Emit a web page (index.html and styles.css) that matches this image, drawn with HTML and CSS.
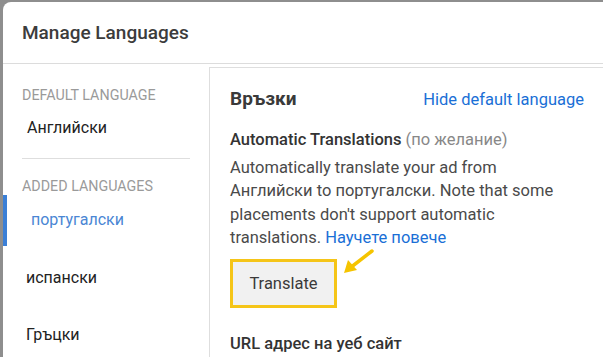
FILE: index.html
```html
<!DOCTYPE html>
<html lang="bg">
<head>
    <meta charset="UTF-8">
    <meta name="viewport" content="width=device-width, initial-scale=1.0">
    <title>Manage Languages</title>
    <link rel="stylesheet" href="styles.css">
</head>
<body>
    <div class="dialog">
        <div class="dialog-header">Manage Languages</div>
        <div class="dialog-body">
            <div class="sidebar">
                <div class="section-label">Default language</div>
                <div class="default-item">Английски</div>
                <div class="divider"></div>
                <div class="section-label">Added languages</div>
                <div class="lang-item active">португалски</div>
                <div class="lang-item">испански</div>
                <div class="lang-item">Гръцки</div>
            </div>
            <div class="main">
                <div class="main-top">
                    <span class="main-title">Връзки</span>
                    <a class="link" href="#">Hide default language</a>
                </div>
                <div class="field-title">Automatic Translations <span class="optional">(по желание)</span></div>
                <p class="desc">Automatically translate your ad from Английски to португалски. Note that some placements don't support automatic translations. <span class="link">Научете повече</span></p>
                <div class="button-row">
                    <div class="highlight">
                        <button class="btn">Translate</button>
                    </div>
                    <svg class="arrow" width="34" height="28" viewBox="0 0 34 28">
                        <path d="M31 3 L9 20" stroke="#f5c400" stroke-width="3.5" stroke-linecap="round" fill="none"/>
                        <path d="M3 25 L7 12 L16 22 Z" fill="#f5c400"/>
                    </svg>
                </div>
                <div class="field-title url-title">URL адрес на уеб сайт</div>
            </div>
        </div>
    </div>
</body>
</html>
```

FILE: styles.css
```css
body {
    margin: 0;
    height: 357px;
    overflow: hidden;
    background-color: #8e8e8e;
    font-family: Roboto, "Liberation Sans", sans-serif;
}

.dialog {
    margin: 2px 0 0 3px;
    height: 355px;
    background-color: white;
    border-top-left-radius: 8px;
    overflow: hidden;
}

.dialog-header {
    height: 62px;
    padding-left: 19px;
    display: flex;
    align-items: center;
    font-size: 19px;
    font-weight: 500;
    color: #3c3c3c;
    border-bottom: 1px solid #dcdcdc;
    box-sizing: border-box;
}

.dialog-body {
    display: flex;
    height: 300px;
}

/* left column */
.sidebar {
    width: 206px;
    flex-shrink: 0;
    padding-top: 22px;
}

.section-label {
    padding-left: 19px;
    font-size: 14.3px;
    text-transform: uppercase;
    color: #9a9a9a;
    height: 18px;
    line-height: 18px;
}

.default-item {
    margin-top: 9px;
    padding-left: 24px;
    font-size: 16px;
    color: #222;
    height: 30px;
    line-height: 30px;
}

.divider {
    margin: 15px 19px 18px 19px;
    border-top: 1px solid #dedede;
}

.lang-item {
    padding-left: 23px;
    font-size: 16px;
    color: #222;
    height: 57px;
    line-height: 57px;
}

.lang-item.active {
    margin-bottom: 3px;
    padding-left: 24px;
    color: #4a86d4;
    border-left: 4px solid #3b7fd6;
    height: 51px;
    line-height: 49px;
}

/* right column */
.main {
    flex: 1;
    margin-top: 3px;
    border-top: 1px solid #dedede;
    border-left: 1px solid #dedede;
    padding: 19px 19px 0 20px;
}

.main-top {
    display: flex;
    justify-content: space-between;
    align-items: baseline;
    height: 24px;
    line-height: 24px;
    margin-bottom: 18px;
}

.main-title {
    font-size: 19px;
    font-weight: 700;
    color: #3a3a3a;
}

.link {
    color: #1a6fd6;
    text-decoration: none;
    font-size: 16.5px;
}

.field-title {
    font-size: 16.5px;
    font-weight: 500;
    color: #333;
    line-height: 22px;
}

.optional {
    font-weight: 400;
    color: #888;
}

.desc {
    margin: 5px 0 0 0;
    font-size: 16.5px;
    line-height: 23.3px;
    color: #4a4a4a;
    max-width: 335px;
}

.button-row {
    display: flex;
    align-items: flex-start;
    margin-top: 10px;
}

.highlight {
    border: 3px solid #f5c518;
}

.btn {
    display: block;
    width: 101px;
    height: 43px;
    border: none;
    background-color: #f1f1f1;
    font-family: Roboto, "Liberation Sans", sans-serif;
    font-size: 16.5px;
    color: #3a3a3a;
}

.arrow {
    margin-left: 4px;
    margin-top: -11px;
}

.url-title {
    margin-top: 25px;
}
```
